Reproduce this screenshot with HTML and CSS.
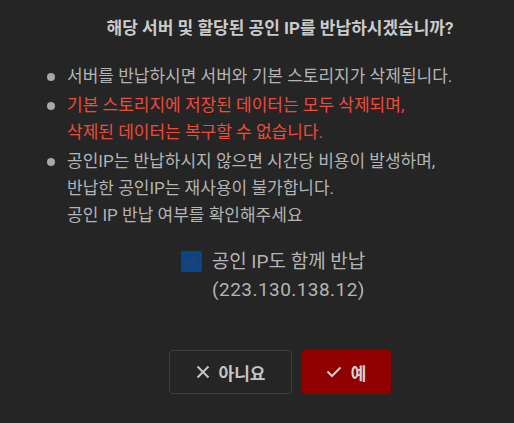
FILE: index.html
```html
<!DOCTYPE html>
<html lang="ko">
<head>
<meta charset="utf-8">
<link rel="stylesheet" href="styles.css">
</head>
<body>
<div class="dialog">
  <h1 class="title">해당 서버 및 할당된 공인 IP를 반납하시겠습니까?</h1>
  <ul class="notes">
    <li>서버를 반납하시면 서버와 기본 스토리지가 삭제됩니다.</li>
    <li class="warn">기본 스토리지에 저장된 데이터는 모두 삭제되며,<br>삭제된 데이터는 복구할 수 없습니다.</li>
    <li>공인IP는 반납하시지 않으면 시간당 비용이 발생하며,<br>반납한 공인IP는 재사용이 불가합니다.<br>공인 IP 반납 여부를 확인해주세요</li>
  </ul>
  <label class="check">
    <span class="box"><svg width="21" height="21" viewBox="0 0 21 21"><path d="M5 10.5l3.6 3.6L16 6.6" fill="none" stroke="#3a414b" stroke-width="2"/></svg></span>
    <span class="check-text">공인 IP도 함께 반납<br><span class="ip">(223.130.138.12)</span></span>
  </label>
  <div class="actions">
    <button class="btn btn-no"><svg width="14" height="14" viewBox="0 0 14 14"><path d="M1.5 1.5l11 11M12.5 1.5l-11 11" stroke="#c4c4c4" stroke-width="2" fill="none"/></svg>아니요</button>
    <button class="btn btn-yes"><svg width="16" height="12" viewBox="0 0 16 12"><path d="M1.5 5.5l4.5 4.5L14.5 1.5" stroke="#d0d0d0" stroke-width="2" fill="none"/></svg>예</button>
  </div>
</div>
</body>
</html>
```

FILE: styles.css
```css
html, body {
  margin: 0;
  padding: 0;
  background: #252525;
}
body {
  font-family: Roboto, "Noto Sans CJK KR", sans-serif;
  color: #b4b4b4;
}
.dialog {
  width: 514px;
  height: 423px;
  box-sizing: border-box;
  padding: 15px 0 0 46px;
  display: flex;
  flex-direction: column;
}
.title {
  margin: 0;
  text-align: center;
  font-size: 17px;
  font-weight: 700;
  line-height: 27px;
  color: #cbcbcb;
}
.notes {
  list-style: none;
  margin: 21px 0 0 0;
  padding: 0;
  font-size: 17px;
  line-height: 27px;
}
.notes li {
  position: relative;
  padding-left: 21px;
  margin-bottom: 2px;
}
.notes li::before {
  content: "";
  position: absolute;
  left: 1px;
  top: 10px;
  width: 8px;
  height: 8px;
  border-radius: 50%;
  background: #a8a8a8;
}
.notes li.warn {
  color: #f04a3a;
}
.check {
  margin: 17px 0 0 0;
  padding-right: 14px;
  display: flex;
  justify-content: center;
  align-items: flex-start;
  gap: 10px;
  font-size: 19px;
  line-height: 28px;
}
.box {
  width: 21px;
  height: 21px;
  border-radius: 2px;
  background: #0d4483;
  margin-top: 3px;
  display: block;
}
.box svg { display: block; }
.check-text {
  text-align: center;
}
.ip {
  letter-spacing: 0.45px;
}
.actions {
  margin-top: 46px;
  display: flex;
  justify-content: center;
  gap: 9px;
}
.btn {
  height: 44px;
  border-radius: 3px;
  font-family: Roboto, "Noto Sans CJK KR", sans-serif;
  font-size: 17px;
  font-weight: 700;
  color: #c6c6c6;
  display: flex;
  align-items: center;
  justify-content: center;
  gap: 9px;
  padding: 0;
}
.btn-no {
  width: 123px;
  background: #252525;
  border: 1px solid #3d3d3d;
}
.btn-yes {
  width: 90px;
  background: #900000;
  border: 1px solid #900000;
  color: #d4d4d4;
}
```
